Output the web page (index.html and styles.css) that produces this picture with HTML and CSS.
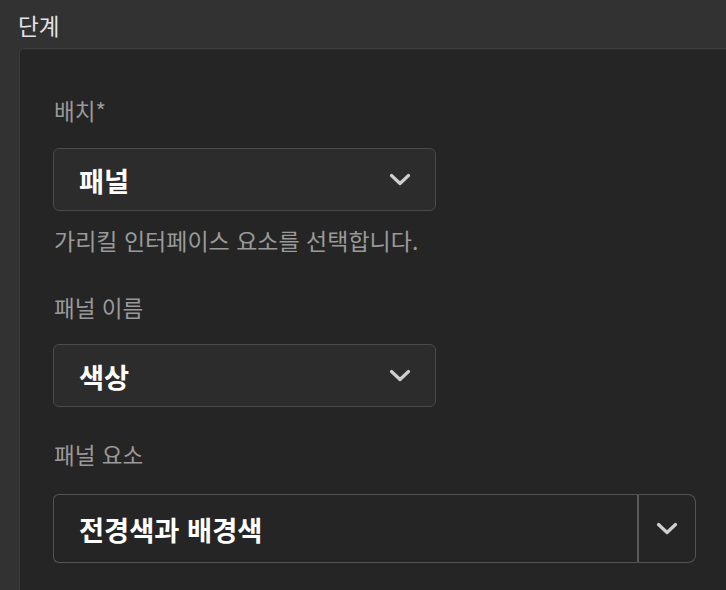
FILE: index.html
```html
<!DOCTYPE html>
<html lang="ko">
<head>
<meta charset="utf-8">
<link rel="stylesheet" href="styles.css">
</head>
<body>
<div class="title">단계</div>
<div class="panel">
  <div class="label first">배치*</div>
  <div class="select">
    <span class="value">패널</span>
    <svg class="chev" width="22" height="14" viewBox="0 0 22 14"><path d="M2.5 2.5 L11 10.5 L19.5 2.5" fill="none" stroke="#cfcfcf" stroke-width="3.2" stroke-linecap="round" stroke-linejoin="round"/></svg>
  </div>
  <div class="help">가리킬 인터페이스 요소를 선택합니다.</div>
  <div class="label second">패널 이름</div>
  <div class="select">
    <span class="value">색상</span>
    <svg class="chev" width="22" height="14" viewBox="0 0 22 14"><path d="M2.5 2.5 L11 10.5 L19.5 2.5" fill="none" stroke="#cfcfcf" stroke-width="3.2" stroke-linecap="round" stroke-linejoin="round"/></svg>
  </div>
  <div class="label third">패널 요소</div>
  <div class="combo">
    <div class="combo-input"><span class="value">전경색과 배경색</span></div>
    <div class="combo-btn">
      <svg class="chev" width="22" height="14" viewBox="0 0 22 14"><path d="M2.5 2.5 L11 10.5 L19.5 2.5" fill="none" stroke="#cfcfcf" stroke-width="3.2" stroke-linecap="round" stroke-linejoin="round"/></svg>
    </div>
  </div>
</div>
</body>
</html>
```
FILE: styles.css
```css
html, body {
  margin: 0;
  padding: 0;
  background: #323232;
  height: 590px;
  overflow: hidden;
}
body {
  font-family: "Noto Sans CJK KR", "Noto Sans", sans-serif;
  color: #e6e6e6;
}
.title {
  padding-left: 18px;
  margin-top: 10px;
  font-size: 22.5px;
  line-height: 30px;
  color: #e4e4e4;
}
.panel {
  margin-top: 8px;
  margin-left: 19px;
  width: 720px;
  height: 571px;
  box-sizing: border-box;
  background: #252525;
  border: 1px solid #3b3b3b;
  border-radius: 5px;
  padding: 0 0 0 33px;
  box-shadow: inset 0 1px 0 #2d2d2d;
  overflow: hidden;
}
.label {
  font-size: 22.5px;
  line-height: 26px;
  color: #9a9a9a;
  padding-left: 1px;
}
.label.first { margin-top: 48px; }
.label.second { margin-top: 41px; }
.label.third { margin-top: 34px; }
.select {
  margin-top: 24px;
  width: 383px;
  height: 63px;
  box-sizing: border-box;
  background: #2c2c2c;
  border: 1px solid #4a4a4a;
  border-radius: 6px;
  display: flex;
  align-items: center;
  justify-content: space-between;
  padding: 0 24px 0 25px;
}
.label.first + .select { margin-top: 25px; }
.value {
  font-size: 27.3px;
  font-weight: 700;
  color: #ffffff;
  line-height: 34px;
}
.chev { display: block; }
.help {
  margin-top: 16px;
  font-size: 23px;
  line-height: 26px;
  color: #9a9a9a;
  padding-left: 1px;
}
.combo {
  margin-top: 27px;
  width: 643px;
  height: 69px;
  box-sizing: border-box;
  display: flex;
}
.combo-input {
  flex: 1;
  border: 1px solid #545454;
  border-right: 2px solid #5a5a5a;
  border-radius: 6px 0 0 6px;
  display: flex;
  align-items: center;
  padding-left: 25px;
  background: #252525;
}
.combo-btn {
  width: 57px;
  box-sizing: border-box;
  border: 1px solid #545454;
  border-left: none;
  border-radius: 0 8px 8px 0;
  display: flex;
  align-items: center;
  justify-content: center;
  background: #252525;
}
```
